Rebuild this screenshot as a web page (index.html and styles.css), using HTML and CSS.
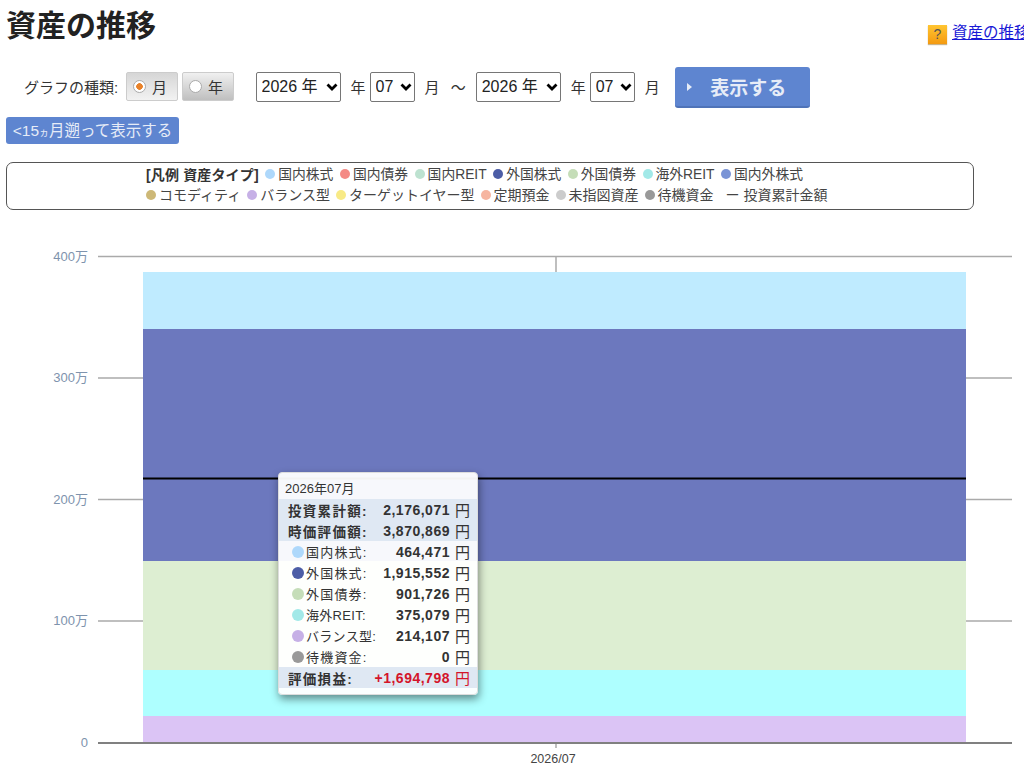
FILE: index.html
```html
<!DOCTYPE html>
<html lang="ja">
<head>
    <meta charset="UTF-8">
    <title>資産の推移</title>
    <link rel="stylesheet" href="styles.css">
</head>
<body>
    <div class="page-head">
        <h1>資産の推移</h1>
        <div class="help">
            <span class="help-icon">?</span>
            <a href="#">資産の推移</a>
        </div>
    </div>

    <div class="controls">
        <span class="controls-label">グラフの種類:</span>
        <span class="radio-btn active"><i></i>月</span>
        <span class="radio-btn"><i></i>年</span>
        <select class="year-select first-select"><option>2026 年</option></select>
        <span class="unit">年</span>
        <select class="month-select"><option>07</option></select>
        <span class="unit wide">月 ～</span>
        <select class="year-select"><option>2026 年</option></select>
        <span class="unit">年</span>
        <select class="month-select"><option>07</option></select>
        <span class="unit wide">月</span>
        <button class="show-btn" type="button"><i></i>表示する</button>
    </div>

    <button class="back-btn" type="button">&lt;15<small>ヵ</small>月遡って表示する</button>

    <div class="legend">
        <div class="legend-inner">
            <div class="legend-line">
                <b>[凡例 資産タイプ]</b>
                <span><i class="dot c1"></i>国内株式</span>
                <span><i class="dot c2"></i>国内債券</span>
                <span><i class="dot c3"></i>国内REIT</span>
                <span><i class="dot c4"></i>外国株式</span>
                <span><i class="dot c5"></i>外国債券</span>
                <span><i class="dot c6"></i>海外REIT</span>
                <span><i class="dot c7"></i>国内外株式</span>
            </div>
            <div class="legend-line second">
                <span><i class="dot c8"></i>コモディティ</span>
                <span><i class="dot c9"></i>バランス型</span>
                <span><i class="dot c10"></i>ターゲットイヤー型</span>
                <span><i class="dot c11"></i>定期預金</span>
                <span><i class="dot c12"></i>未指図資産</span>
                <span><i class="dot c13"></i>待機資金</span>
                <span class="legend-total">ー 投資累計金額</span>
            </div>
        </div>
    </div>

    <div class="chart">
        <svg class="chart-svg" width="1024" height="537" viewBox="0 230 1024 537">
            <g class="grid">
                <line x1="98" x2="1012" y1="256.5" y2="256.5"/>
                <line x1="98" x2="1012" y1="378" y2="378"/>
                <line x1="98" x2="1012" y1="499.5" y2="499.5"/>
                <line x1="98" x2="1012" y1="621" y2="621"/>
                <line x1="556" x2="556" y1="256" y2="272"/>
                <line x1="556" x2="556" y1="743" y2="748"/>
            </g>
            <rect x="143" y="272" width="823" height="57" fill="#bfebff"/>
            <rect x="143" y="329" width="823" height="232" fill="#6c78be"/>
            <rect x="143" y="561" width="823" height="109" fill="#ddeed2"/>
            <rect x="143" y="670" width="823" height="46" fill="#aeffff"/>
            <rect x="143" y="716" width="823" height="27" fill="#dbc4f5"/>
            <line class="axis" x1="98" x2="1012" y1="743" y2="743"/>
            <line class="total-line" x1="143" x2="966" y1="478.5" y2="478.5"/>
            <g class="y-labels">
                <text x="88" y="261">400万</text>
                <text x="88" y="382">300万</text>
                <text x="88" y="504">200万</text>
                <text x="88" y="625">100万</text>
                <text x="88" y="747">0</text>
            </g>
            <text class="x-label" x="553" y="763">2026/07</text>
        </svg>

        <div class="tooltip">
            <div class="tip-title">2026年07月</div>
            <div class="tip-row strong shade"><span class="tip-name">投資累計額:</span><span class="tip-val">2,176,071</span><span class="tip-yen">円</span></div>
            <div class="tip-row strong shade"><span class="tip-name">時価評価額:</span><span class="tip-val">3,870,869</span><span class="tip-yen">円</span></div>
            <div class="tip-row"><i class="tip-dot c1"></i><span class="tip-name">国内株式:</span><span class="tip-val">464,471</span><span class="tip-yen">円</span></div>
            <div class="tip-row"><i class="tip-dot c4"></i><span class="tip-name">外国株式:</span><span class="tip-val">1,915,552</span><span class="tip-yen">円</span></div>
            <div class="tip-row"><i class="tip-dot c5"></i><span class="tip-name">外国債券:</span><span class="tip-val">901,726</span><span class="tip-yen">円</span></div>
            <div class="tip-row"><i class="tip-dot c6"></i><span class="tip-name tight">海外REIT:</span><span class="tip-val">375,079</span><span class="tip-yen">円</span></div>
            <div class="tip-row"><i class="tip-dot c9"></i><span class="tip-name tight">バランス型:</span><span class="tip-val">214,107</span><span class="tip-yen">円</span></div>
            <div class="tip-row"><i class="tip-dot c13"></i><span class="tip-name">待機資金:</span><span class="tip-val">0</span><span class="tip-yen">円</span></div>
            <div class="tip-row strong shade profit"><span class="tip-name">評価損益:</span><span class="tip-val">+1,694,798</span><span class="tip-yen">円</span></div>
        </div>
    </div>
</body>
</html>
```

FILE: styles.css
```css
* {
    margin: 0;
    padding: 0;
    box-sizing: border-box;
}

html, body {
    height: 767px;
    overflow: hidden;
}

body {
    font-family: "Liberation Sans", "Noto Sans CJK JP", sans-serif;
    background-color: #fff;
    color: #333;
    font-size: 14px;
}

.page-head {
    display: flex;
    height: 67px;
    padding-left: 6px;
}

h1 {
    flex: 0 0 922px;
    font-size: 30px;
    line-height: 34px;
    padding-top: 9px;
    color: #222;
}

.help {
    display: flex;
    flex: none;
    align-items: flex-start;
    gap: 5px;
    height: 19px;
    margin-top: 25px;
    white-space: nowrap;
}

.help a {
    color: #1a1ad6;
    font-size: 15.5px;
    line-height: 16px;
}

.help-icon {
    width: 19px;
    height: 19px;
    background: linear-gradient(#ffc531, #f49a10);
    box-shadow: 0 1px 1px #c9b38a;
    color: #555;
    font-size: 14px;
    line-height: 19px;
    text-align: center;
}

.controls {
    display: flex;
    align-items: center;
    height: 41px;
    padding-left: 24px;
}

.controls-label {
    width: 102px;
    margin-bottom: 2px;
    font-size: 15px;
    white-space: nowrap;
}

.radio-btn {
    display: flex;
    align-items: center;
    gap: 6px;
    width: 52px;
    height: 29px;
    margin: 0 4px 2px 0;
    padding-left: 6px;
    border: 1px solid #ccc;
    border-radius: 2px;
    background: linear-gradient(#f0f0f0, #bfbfbf);
    font-size: 15px;
}

.radio-btn.active {
    background: linear-gradient(#d6d6d6, #f2f2f2);
}

.radio-btn i {
    width: 13px;
    height: 13px;
    border: 1px solid #aaa;
    border-radius: 50%;
    background: #fff;
}

.radio-btn.active i {
    background: radial-gradient(circle, #e8822a 0 3px, #fff 3.6px);
}

select {
    appearance: none;
    height: 30px;
    margin-bottom: 2px;
    padding-left: 5px;
    border: 1px solid #767676;
    border-radius: 2px;
    background: #fff url("data:image/svg+xml,%3Csvg xmlns='http://www.w3.org/2000/svg' width='12' height='8'%3E%3Cpath d='M1.5 1.500 6 6l4.500-4.500' fill='none' stroke='%23000' stroke-width='2.800'/%3E%3C/svg%3E") no-repeat right 2px center;
    color: #222;
    font-family: inherit;
    font-size: 16px;
}

.year-select {
    width: 85px;
}

.month-select {
    width: 45px;
}

.first-select {
    margin-left: 17.5px;
}

.unit {
    margin-bottom: 2px;
    padding: 0 4px 0 10px;
    font-size: 15px;
    word-spacing: 7px;
    white-space: nowrap;
}

.unit.wide {
    padding-right: 10px;
}

.show-btn {
    display: flex;
    align-items: center;
    width: 135px;
    height: 41px;
    margin-left: 5.5px;
    padding-left: 12px;
    border: none;
    border-bottom: 2px solid #4f73b8;
    border-radius: 3px;
    background-color: #5e85d0;
    color: #e6ecf7;
    font-family: inherit;
    font-size: 19px;
    font-weight: bold;
}

.show-btn i {
    margin-right: 18px;
    border-left: 5px solid #e6ecf7;
    border-top: 4px solid transparent;
    border-bottom: 4px solid transparent;
}

.back-btn {
    display: block;
    width: 173px;
    height: 27px;
    margin: 9px 0 0 6px;
    padding-bottom: 3px;
    border: none;
    border-radius: 3px;
    background-color: #5e85d0;
    color: #e6ecf7;
    font-family: inherit;
    font-size: 15.5px;
    white-space: nowrap;
}

.back-btn small {
    font-size: 10px;
}

.legend {
    display: flex;
    justify-content: center;
    width: 968px;
    height: 48px;
    margin: 18px 0 0 6px;
    padding-top: 2px;
    border: 1px solid #555;
    border-radius: 7px;
}

.legend-inner {
    width: 682px;
    margin-right: 6px;
}

.legend-line {
    display: flex;
    gap: 6.5px;
    height: 19.5px;
    line-height: 20px;
    font-size: 13.8px;
    color: #444;
    white-space: nowrap;
}

.legend-line.second {
    gap: 6px;
    font-size: 14px;
}

.legend-line b {
    font-size: 14px;
    letter-spacing: 0.15px;
    color: #333;
}

.legend-total {
    margin-left: 6px;
}

.dot {
    display: inline-block;
    width: 10px;
    height: 10px;
    margin-right: 3px;
    border-radius: 50%;
}

.c1 { background-color: #aed8fb; }
.c2 { background-color: #f48a85; }
.c3 { background-color: #bde2d0; }
.c4 { background-color: #4c5da6; }
.c5 { background-color: #c5ddb8; }
.c6 { background-color: #a2e9e8; }
.c7 { background-color: #7a94d6; }
.c8 { background-color: #cdb877; }
.c9 { background-color: #c6b0e6; }
.c10 { background-color: #f8ea86; }
.c11 { background-color: #f6b5a0; }
.c12 { background-color: #cccccc; }
.c13 { background-color: #999999; }

.chart {
    position: relative;
    margin-top: 20px;
}

.chart-svg {
    display: block;
}

.grid line {
    stroke: #aaa;
    stroke-width: 1.5;
}

.axis {
    stroke: #808080;
    stroke-width: 2;
}

.total-line {
    stroke: #000;
    stroke-width: 2;
}

.y-labels text {
    fill: #7e93ad;
    font-size: 13px;
    text-anchor: end;
}

.x-label {
    fill: #444;
    font-size: 12.5px;
    text-anchor: middle;
}

.tooltip {
    position: absolute;
    left: 278px;
    top: 242px;
    width: 200px;
    height: 223px;
    padding-top: 6px;
    border-radius: 4px;
    background-color: rgba(255, 255, 255, 0.95);
    border: 1px solid #ddd;
    box-shadow: 1px 4px 8px rgba(0, 0, 0, 0.45);
}

.tip-title {
    height: 20px;
    padding-left: 6px;
    font-size: 13px;
    line-height: 20px;
}

.tip-row {
    display: flex;
    align-items: center;
    height: 21px;
    padding: 0 7px 0 13px;
    font-size: 13px;
    letter-spacing: 1.2px;
}

.tip-row.strong {
    padding-left: 9px;
    font-size: 13.5px;
    font-weight: bold;
    letter-spacing: 1.3px;
}

.tip-row.shade {
    background-color: #dfe8f3;
}

.tip-dot {
    flex: none;
    width: 12px;
    height: 12px;
    margin-right: 2px;
    border-radius: 50%;
}

.tip-name {
    white-space: nowrap;
}

.tip-name.tight {
    letter-spacing: 0.3px;
}

.tip-val {
    margin-left: auto;
    font-size: 14px;
    font-weight: bold;
    letter-spacing: 0.5px;
}

.tip-yen {
    margin-left: 5px;
    font-size: 15px;
    font-weight: normal;
    letter-spacing: 0;
}

.profit .tip-val,
.profit .tip-yen {
    color: #d4142a;
}
```
